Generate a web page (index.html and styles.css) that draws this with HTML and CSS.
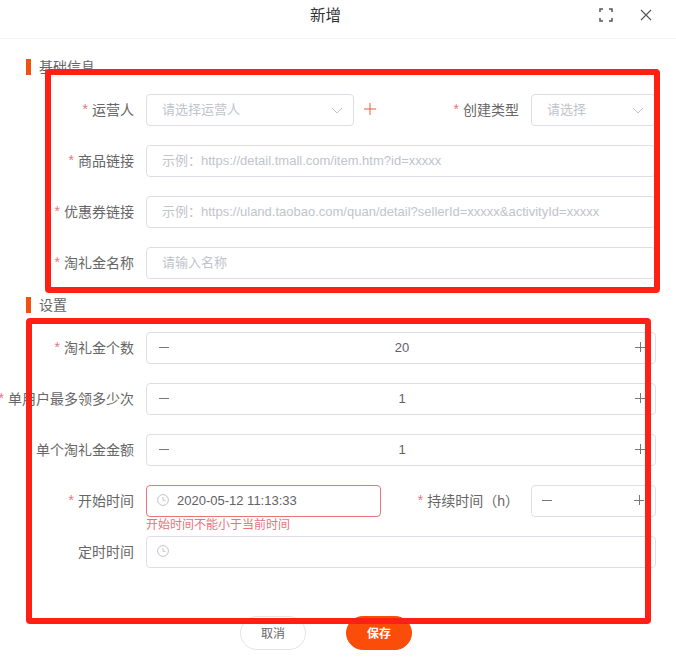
FILE: index.html
```html
<!DOCTYPE html>
<html lang="zh-CN">
<head>
<meta charset="utf-8">
<title>新增</title>
<link rel="stylesheet" href="styles.css">
</head>
<body>

<div class="dialog">

  <div class="header">
    <span class="title">新增</span>
    <div class="actions">
      <svg class="icon expand" width="14" height="14" viewBox="0 0 14 14"><path d="M1 4V1H4M10 1H13V4M13 10V13H10M4 13H1V10"/></svg>
      <svg class="icon" width="12" height="12" viewBox="0 0 12 12"><path d="M1 1L11 11M11 1L1 11"/></svg>
    </div>
  </div>

  <div class="body">

    <h4 class="section-title">基础信息</h4>

    <div class="row">
      <label class="label"><i>*</i>运营人</label>
      <div class="box select wide"><span class="placeholder">请选择运营人</span>
        <svg class="chevron" width="12" height="7" viewBox="0 0 12 7"><path d="M1 1L6 6L11 1"/></svg></div>
      <svg class="add" width="12" height="12" viewBox="0 0 12 12"><path d="M6 0V12M0 6H12"/></svg>
      <label class="label side"><i>*</i>创建类型</label>
      <div class="box select short"><span class="placeholder">请选择</span>
        <svg class="chevron" width="12" height="7" viewBox="0 0 12 7"><path d="M1 1L6 6L11 1"/></svg></div>
    </div>

    <div class="row">
      <label class="label"><i>*</i>商品链接</label>
      <div class="box grow"><span class="placeholder">示例：https://detail.tmall.com/item.htm?id=xxxxx</span></div>
    </div>

    <div class="row">
      <label class="label"><i>*</i>优惠券链接</label>
      <div class="box grow"><span class="placeholder">示例：https://uland.taobao.com/quan/detail?sellerId=xxxxx&amp;activityId=xxxxx</span></div>
    </div>

    <div class="row last">
      <label class="label"><i>*</i>淘礼金名称</label>
      <div class="box grow"><span class="placeholder">请输入名称</span></div>
    </div>

    <h4 class="section-title">设置</h4>

    <div class="row">
      <label class="label"><i>*</i>淘礼金个数</label>
      <div class="box grow stepper"><span class="minus"></span><span class="value">20</span><span class="plus"></span></div>
    </div>

    <div class="row">
      <label class="label"><i>*</i>单用户最多领多少次</label>
      <div class="box grow stepper"><span class="minus"></span><span class="value">1</span><span class="plus"></span></div>
    </div>

    <div class="row">
      <label class="label">单个淘礼金金额</label>
      <div class="box grow stepper"><span class="minus"></span><span class="value">1</span><span class="plus"></span></div>
    </div>

    <div class="row">
      <label class="label"><i>*</i>开始时间</label>
      <div class="field">
        <div class="box date error">
          <svg class="clock" width="12" height="12" viewBox="0 0 12 12"><circle cx="6" cy="6" r="5.4"/><path d="M6 3V6.3H8.6"/></svg>
          <span>2020-05-12 11:13:33</span>
        </div>
        <div class="error-text">开始时间不能小于当前时间</div>
      </div>
      <label class="label side"><i>*</i>持续时间（h）</label>
      <div class="box short stepper"><span class="minus"></span><span class="value"></span><span class="plus"></span></div>
    </div>

    <div class="row">
      <label class="label">定时时间</label>
      <div class="box grow date">
        <svg class="clock" width="12" height="12" viewBox="0 0 12 12"><circle cx="6" cy="6" r="5.4"/><path d="M6 3V6.3H8.6"/></svg>
      </div>
    </div>

  </div>

  <div class="footer">
    <button class="btn">取消</button>
    <button class="btn primary">保存</button>
  </div>

  <div class="mark mark-1"></div>
  <div class="mark mark-2"></div>

</div>

</body>
</html>
```

FILE: styles.css
```css
* {
   box-sizing: border-box; }

html, body {
   margin: 0;
   background: #fff; }

body {
   width: 676px;
   height: 658px;
   overflow: hidden;
   font-family: "Liberation Sans", "Noto Sans CJK SC", sans-serif;
   font-size: 14px;
   color: #606266; }

.dialog {
   position: relative;
   height: 658px; }

.header {
   display: flex;
   justify-content: space-between;
   align-items: center;
   height: 39px;
   padding: 0 24px 8px 310px;
   border-bottom: 1px solid #f5f5f5; }

.title {
   padding-bottom: 2px;
   font-size: 15.5px;
   color: #333; }

.actions {
   display: flex;
   align-items: center;
   gap: 27px; }

.icon {
   fill: none;
   stroke: #555;
   stroke-width: 1.1; }

.icon.expand {
   stroke-width: 1.5; }

.body {
   padding-top: 20px; }

.section-title {
   display: flex;
   align-items: center;
   height: 16px;
   margin: 0 0 19px 26px;
   padding: 0 0 2px 8px;
   border-left: 5px solid #f2500f;
   font-size: 14px;
   font-weight: normal;
   color: #666; }

.row {
   display: flex;
   align-items: flex-start;
   height: 32px;
   margin-bottom: 19px;
   padding-right: 20px; }

.row.last {
   margin-bottom: 18px; }

.label {
   flex: none;
   display: flex;
   justify-content: flex-end;
   align-items: center;
   width: 134px;
   height: 32px;
   margin-right: 12px;
   padding-bottom: 2px;
   white-space: nowrap;
   color: #666; }

.label i {
   margin-right: 4px;
   font-style: normal;
   color: #e8747c; }

.label.side {
   flex: 1;
   width: auto;
   margin-right: 12px; }

.box {
   display: flex;
   align-items: center;
   height: 32px;
   padding: 0 15px 2px;
   border: 1px solid #dcdfe6;
   border-radius: 4px;
   background: #fff;
   font-size: 13px;
   white-space: nowrap;
   overflow: hidden; }

.grow {
   flex: 1; }

.wide {
   flex: none;
   width: 208px; }

.short {
   flex: none;
   width: 125px; }

.select {
   justify-content: space-between;
   padding-right: 10px; }

.select.short {
   padding-right: 11px; }

.placeholder {
   padding-bottom: 2px;
   color: #c0c4cc; }

.chevron {
   flex: none;
   margin-top: 2px;
   fill: none;
   stroke: #c0c4cc;
   stroke-width: 1; }

.add {
   flex: none;
   margin: 9px 0 0 10px;
   fill: none;
   stroke: #ee5a3a;
   stroke-width: 1; }

.stepper {
   padding: 0 10px 2px 12px; }

.stepper.short {
   padding: 0 11px 2px 10px; }

.stepper .value {
   flex: 1;
   text-align: center;
   color: #606266; }

.minus, .plus {
   position: relative;
   flex: none;
   width: 10px;
   height: 1px;
   background: #777; }

.plus:after {
   content: "";
   position: absolute;
   left: 4.5px;
   top: -4.5px;
   width: 1px;
   height: 10px;
   background: #777; }

.field {
   flex: none;
   width: 235px; }

.date {
   padding-left: 10px;
   gap: 8px; }

.clock {
   flex: none;
   fill: none;
   stroke: #c0c4cc;
   stroke-width: 1; }

.date.error {
   border-color: #e8747c; }

.error-text {
   font-size: 12px;
   line-height: 16px;
   color: #e8747c;
   white-space: nowrap; }

.footer {
   display: flex;
   justify-content: flex-start;
   gap: 40px;
   padding: 29px 0 0 240px; }

.btn {
   width: 66px;
   height: 34px;
   padding: 0 0 2px;
   border: 1px solid #e5e5e5;
   border-radius: 17px;
   background: #fff;
   font-family: inherit;
   font-size: 12px;
   color: #666; }

.btn.primary {
   border-color: #fa4d09;
   background: #fa4d09;
   font-weight: bold;
   color: #fff; }

/* red annotation frames drawn over the form */
.mark {
   position: absolute;
   border: 6px solid #ff2015;
   border-radius: 4px; }

.mark-1 {
   left: 45px;
   top: 69px;
   width: 615px;
   height: 224px; }

.mark-2 {
   left: 26px;
   top: 318px;
   width: 625px;
   height: 306px; }
```
